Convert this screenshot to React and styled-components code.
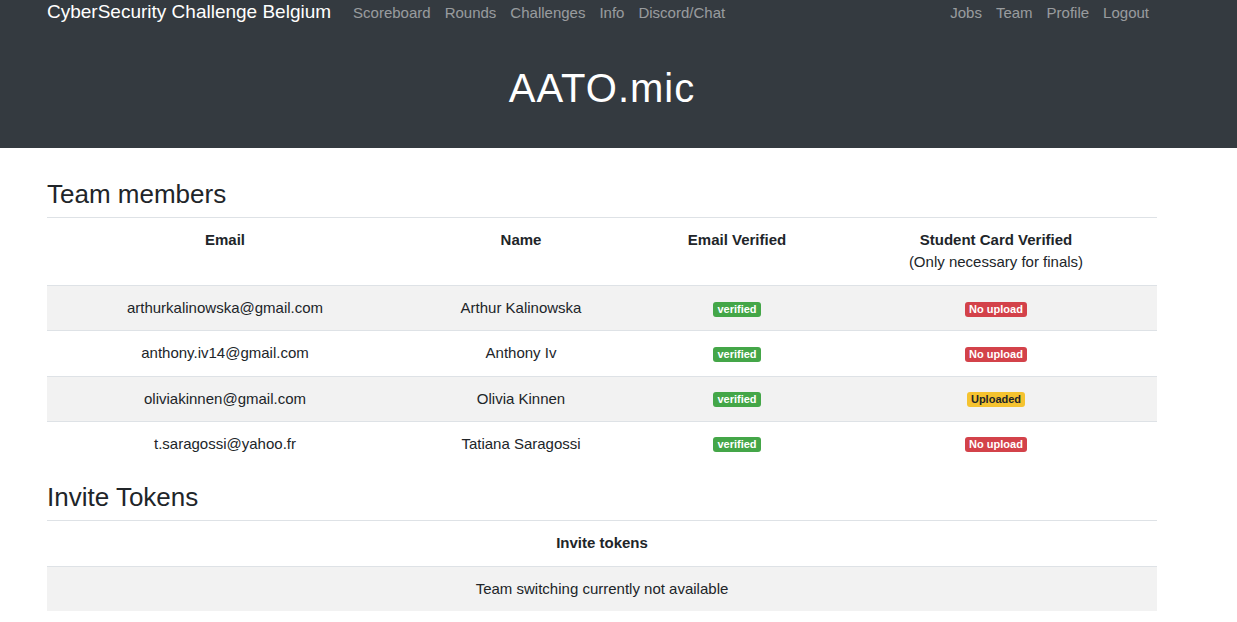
import styled, { createGlobalStyle } from "styled-components";

const members = [
  { email: "arthurkalinowska@gmail.com", name: "Arthur Kalinowska", card: "none" },
  { email: "anthony.iv14@gmail.com", name: "Anthony Iv", card: "none" },
  { email: "oliviakinnen@gmail.com", name: "Olivia Kinnen", card: "uploaded" },
  { email: "t.saragossi@yahoo.fr", name: "Tatiana Saragossi", card: "none" },
];

const GlobalStyle = createGlobalStyle`
  body {
    margin: 0;
    font-family: "Liberation Sans", Arial, sans-serif;
    font-size: 15px;
    color: #212529;
    background: #fff;
  }
`;

const App = () => {
  return (
    <>
      <GlobalStyle />
      <Header>
        <Nav>
          <Brand>CyberSecurity Challenge Belgium</Brand>
          <NavLinks>
            <NavLink>Scoreboard</NavLink>
            <NavLink>Rounds</NavLink>
            <NavLink>Challenges</NavLink>
            <NavLink>Info</NavLink>
            <NavLink>Discord/Chat</NavLink>
          </NavLinks>
          <NavLinks right>
            <NavLink>Jobs</NavLink>
            <NavLink>Team</NavLink>
            <NavLink>Profile</NavLink>
            <NavLink>Logout</NavLink>
          </NavLinks>
        </Nav>
        <TeamTitle>AATO.mic</TeamTitle>
      </Header>

      <Main>
        <SectionTitle>Team members</SectionTitle>
        <Table>
          <colgroup>
            <col style={{ width: "356px" }} />
            <col style={{ width: "236px" }} />
            <col style={{ width: "196px" }} />
            <col style={{ width: "322px" }} />
          </colgroup>
          <thead>
            <tr>
              <Th>Email<br /><br /></Th>
              <Th>Name</Th>
              <Th>Email Verified</Th>
              <Th>
                Student Card Verified
                <br />
                <Note>(Only necessary for finals)</Note>
              </Th>
            </tr>
          </thead>
          <tbody>
            {members.map((m, i) => (
              <Row key={m.email} striped={i % 2 === 0}>
                <Td>{m.email}</Td>
                <Td>{m.name}</Td>
                <Td><Badge kind="green">verified</Badge></Td>
                <Td>
                  {m.card === "uploaded" ? (
                    <Badge kind="yellow">Uploaded</Badge>
                  ) : (
                    <Badge kind="red">No upload</Badge>
                  )}
                </Td>
              </Row>
            ))}
          </tbody>
        </Table>

        <SectionTitle second>Invite Tokens</SectionTitle>
        <Table>
          <thead>
            <tr>
              <Th>Invite tokens</Th>
            </tr>
          </thead>
          <tbody>
            <Row striped>
              <Td>Team switching currently not available</Td>
            </Row>
          </tbody>
        </Table>
      </Main>
    </>
  );
};

const Header = styled.header`
  background: #343a40;
  height: 148px;
  display: flex;
  flex-direction: column;
`;

const Nav = styled.nav`
  display: flex;
  align-items: center;
  width: 1110px;
  margin-left: 47px;
  height: 24px;
`;

const Brand = styled.a`
  color: #fff;
  font-size: 19px;
  margin-right: 15px;
  white-space: nowrap;
`;

const NavLinks = styled.div`
  display: flex;
  margin-left: ${(p) => (p.right ? "auto" : "0")};
  margin-right: ${(p) => (p.right ? "1px" : "0")};
`;

const NavLink = styled.a`
  color: rgba(255, 255, 255, 0.5);
  font-size: 15px;
  padding: 0 7px;
`;

const TeamTitle = styled.h1`
  margin: 42px 0 0;
  color: #fff;
  font-weight: 400;
  font-size: 40px;
  letter-spacing: 1px;
  text-align: center;
  width: 1110px;
  margin-left: 47px;
`;

const Main = styled.main`
  width: 1110px;
  margin-left: 47px;
`;

const SectionTitle = styled.h2`
  font-size: 26px;
  font-weight: 400;
  line-height: 31px;
  margin: ${(p) => (p.second ? "16px" : "31px")} 0 7px;
`;

const Table = styled.table`
  width: 100%;
  border-collapse: collapse;
  table-layout: fixed;
`;

const Th = styled.th`
  border-top: 1px solid #dee2e6;
  padding: 11px 8px 12px;
  font-weight: 700;
  line-height: 22px;
  text-align: center;
  vertical-align: top;
`;

const Note = styled.span`
  font-weight: 400;
`;

const Row = styled.tr`
  background: ${(p) => (p.striped ? "#f2f2f2" : "#fff")};
`;

const Td = styled.td`
  border-top: 1px solid #dee2e6;
  padding: 11px 8px;
  line-height: 22.25px;
  text-align: center;
  vertical-align: middle;
`;

const badgeColors = {
  green: { bg: "#44a648", fg: "#fff" },
  red: { bg: "#d3424a", fg: "#fff" },
  yellow: { bg: "#f5c330", fg: "#212529" },
};

const Badge = styled.span`
  display: inline-block;
  padding: 2px 4px 2px;
  font-size: 11px;
  font-weight: 700;
  line-height: 11px;
  border-radius: 3px;
  background: ${(p) => badgeColors[p.kind].bg};
  color: ${(p) => badgeColors[p.kind].fg};
  vertical-align: middle;
`;

export default App;
